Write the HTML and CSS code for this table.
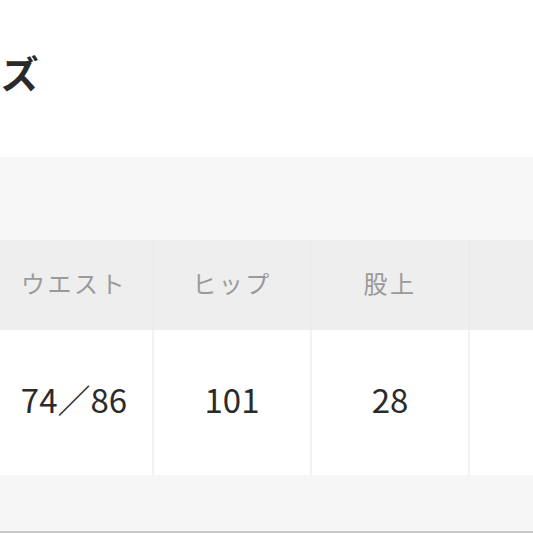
FILE: index.html
```html
<!DOCTYPE html>
<html lang="ja">
<head>
<meta charset="utf-8">
<link rel="stylesheet" href="styles.css">
</head>
<body>
<section class="size">
  <header class="title-block">
    <h2 class="title">サイズ</h2>
  </header>
  <div class="band"></div>
  <div class="table">
    <div class="row head">
      <div class="cell">ウエスト</div>
      <div class="cell">ヒップ</div>
      <div class="cell">股上</div>
      <div class="cell"></div>
    </div>
    <div class="row body">
      <div class="cell">74／86</div>
      <div class="cell">101</div>
      <div class="cell">28</div>
      <div class="cell"></div>
    </div>
  </div>
  <div class="footer-band"></div>
</section>
</body>
</html>
```
FILE: styles.css
```css
html, body {
  margin: 0;
  padding: 0;
  background: #ffffff;
  overflow: hidden;
}
body {
  width: 533px;
  height: 533px;
  font-family: "Noto Sans CJK JP", "Noto Sans", sans-serif;
}
.size {
  display: flex;
  flex-direction: column;
  height: 533px;
}
.title-block {
  height: 157px;
  box-sizing: border-box;
  padding-top: 47px;
}
.title {
  margin: 0 0 0 -74px;
  font-size: 38px;
  line-height: 1.3;
  font-weight: 700;
  color: #2a2a2a;
  white-space: nowrap;
}
.band {
  height: 83px;
  background: #f7f7f7;
}
.table {
  display: flex;
  flex-direction: column;
}
.row {
  display: grid;
  grid-template-columns: repeat(4, 156px);
  column-gap: 2px;
  margin-left: -4px;
}
.row.head {
  height: 90px;
  background: #ebebeb;
}
.row.head .cell {
  background: #eeeeee;
  color: #9a9a9a;
  font-size: 24px;
  letter-spacing: 2.5px;
  padding-bottom: 6px;
}
.row.body {
  height: 145px;
  background: #f2f2f2;
}
.row.body .cell {
  background: #ffffff;
  color: #2b2b2b;
  font-size: 33px;
  padding-bottom: 8px;
}
.cell {
  display: flex;
  align-items: center;
  justify-content: center;
  white-space: nowrap;
  box-sizing: border-box;
}
.footer-band {
  flex: 1;
  background: #f6f6f6;
  border-bottom: 2px solid #c9c9c9;
}
```
